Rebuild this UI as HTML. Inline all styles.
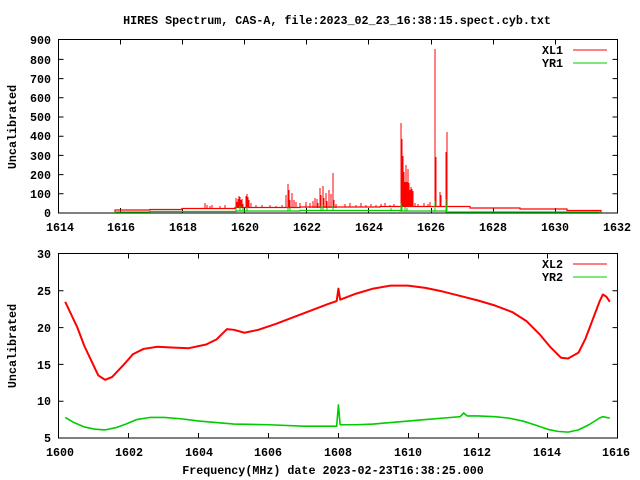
<!DOCTYPE html>
<html><head><style>
html,body{margin:0;padding:0;background:#fff;}
svg{display:block;}
text{font-family:"Liberation Mono","DejaVu Sans Mono",monospace;font-weight:bold;font-size:11.7px;fill:#000;}
</style></head><body>
<svg width="640" height="480" viewBox="0 0 640 480" xmlns="http://www.w3.org/2000/svg">
<rect width="640" height="480" fill="#fff"/>
<text x="337" y="24" text-anchor="middle">HIRES Spectrum, CAS-A, file:2023_02_23_16:38:15.spect.cyb.txt</text>

<!-- TOP PLOT -->
<g stroke="#000" stroke-width="1" fill="none">
<rect x="58.5" y="39.5" width="559" height="173.5"/>
<path d="M58.5 193.8h5M58.5 174.6h5M58.5 155.4h5M58.5 136.2h5M58.5 117h5M58.5 97.8h5M58.5 78.6h5M58.5 59.4h5
M617.5 193.8h-5M617.5 174.6h-5M617.5 155.4h-5M617.5 136.2h-5M617.5 117h-5M617.5 97.8h-5M617.5 78.6h-5M617.5 59.4h-5
M120.5 213v-5M182.5 213v-5M244.5 213v-5M306.5 213v-5M368.5 213v-5M431.5 213v-5M493.5 213v-5M555.5 213v-5
M120.5 39.5v5M182.5 39.5v5M244.5 39.5v5M306.5 39.5v5M368.5 39.5v5M431.5 39.5v5M493.5 39.5v5M555.5 39.5v5"/>
</g>
<g text-anchor="end">
<text x="51" y="217">0</text><text x="51" y="198">100</text><text x="51" y="179">200</text><text x="51" y="160">300</text><text x="51" y="140">400</text><text x="51" y="121">500</text><text x="51" y="102">600</text><text x="51" y="83">700</text><text x="51" y="64">800</text><text x="51" y="44">900</text>
</g>
<g text-anchor="middle">
<text x="60" y="231">1614</text><text x="121" y="231">1616</text><text x="183" y="231">1618</text><text x="245" y="231">1620</text><text x="307" y="231">1622</text><text x="369" y="231">1624</text><text x="431" y="231">1626</text><text x="493" y="231">1628</text><text x="555" y="231">1630</text><text x="617" y="231">1632</text>
</g>
<text transform="translate(16,127) rotate(-90)" text-anchor="middle">Uncalibrated</text>
<text x="563" y="54" text-anchor="end">XL1</text>
<text x="563" y="67" text-anchor="end">YR1</text>
<path d="M573 50h34" stroke="#f00" stroke-width="1"/>
<path d="M573 63h34" stroke="#0c0" stroke-width="1"/>

<path d="M115 213V210H150V209.5H182V208.5H235V207.5H300V207H380V206.5H470V208H520V209H567V210.5H601V213" stroke="#f00" stroke-width="1.2" fill="none"/>
<path stroke="#f00" stroke-width="1" fill="none" d="
M205 208V203M207 208V205M210 208V206M212 208V205M220 208V206M225 208V205
M236 208V198M237 208V202M238 208V199M239 208V196M240 208V197M241 208V200M242 208V199M243 208V204M246 208V196M247 208V194M248 208V197M249 208V200M251 208V203
M256 208V205M262 208V205M270 208V205M276 208V206M282 208V205
M286 208V195M288 208V184M289 208V190M290 208V200M292 208V193M294 208V200M296 208V202M300 208V203
M306 208V202M310 208V203M313 208V201M315 208V198M317 208V199M318 208V203M320 208V188M321 208V195M323 208V186M324 208V198M326 208V193M327 208V201M329 208V190M331 208V194M333 208V173M334 208V200M336 208V204
M345 207V204M350 207V203M356 207V205M361 207V203M366 207V205M371 207V204M376 207V205
M381 207V204M385 207V203M390 207V205M394 207V204
M401 207V123M402 207V139M403 207V156M404 207V172M405 207V182M406 207V165M407 207V182M408 207V169M409 207V183M410 207V190M411 207V187M412 207V189M413 207V191
M415 207V203M418 207V204M424 207V203M428 207V204M430 207V202
M435 207V49M436 207V157M440 207V192M441 207V195M446 207V152M447 207V132"/>
<path d="M115 213V212H150V211.5H236V211H300V210.5H400V211H446V212H600V213" stroke="#0c0" stroke-width="1.2" fill="none"/>
<path stroke="#0c0" stroke-width="1" fill="none" d="M236 211V207M240 211V206M243 211V208M247 211V207M288 211V207M290 211V208M321 211V206M323 211V205M327 211V208M333 211V206M401 211V203M402 211V206M405 211V207M407 211V208M435 211V201M446 211V199M447 211V205M391 211V208"/>

<!-- BOTTOM PLOT -->
<g stroke="#000" stroke-width="1" fill="none">
<rect x="58.5" y="253.5" width="559" height="184.5"/>
<path d="M58.5 401.2h5M58.5 364.4h5M58.5 327.6h5M58.5 290.8h5
M617.5 401.2h-5M617.5 364.4h-5M617.5 327.6h-5M617.5 290.8h-5
M128.5 438v-5M198.5 438v-5M268.5 438v-5M338.5 438v-5M408.5 438v-5M478.5 438v-5M547.5 438v-5
M128.5 253.5v5M198.5 253.5v5M268.5 253.5v5M338.5 253.5v5M408.5 253.5v5M478.5 253.5v5M547.5 253.5v5"/>
</g>
<g text-anchor="end">
<text x="51" y="442">5</text><text x="51" y="405">10</text><text x="51" y="369">15</text><text x="51" y="332">20</text><text x="51" y="295">25</text><text x="51" y="258">30</text>
</g>
<g text-anchor="middle">
<text x="60" y="456">1600</text><text x="129" y="456">1602</text><text x="199" y="456">1604</text><text x="268" y="456">1606</text><text x="338" y="456">1608</text><text x="408" y="456">1610</text><text x="477" y="456">1612</text><text x="547" y="456">1614</text><text x="616" y="456">1616</text>
</g>
<text transform="translate(16,346) rotate(-90)" text-anchor="middle">Uncalibrated</text>
<text x="333" y="474" text-anchor="middle">Frequency(MHz) date 2023-02-23T16:38:25.000</text>
<text x="563" y="268" text-anchor="end">XL2</text>
<text x="563" y="281" text-anchor="end">YR2</text>
<path d="M573 264h34" stroke="#f00" stroke-width="1"/>
<path d="M573 277h34" stroke="#0c0" stroke-width="1"/>

<g transform="translate(60,438) scale(34.8,-7.36) translate(-1600,-5)">
<polyline vector-effect="non-scaling-stroke" stroke="#f00" stroke-width="2" fill="none" stroke-linejoin="round" points="
1600.15,23.5 1600.3,22 1600.5,20 1600.7,17.5 1600.9,15.5 1601.1,13.5 1601.3,12.9 1601.5,13.3 1601.8,14.8 1602.1,16.4 1602.4,17.1 1602.8,17.4 1603.2,17.3 1603.7,17.2 1604.2,17.7 1604.5,18.4 1604.8,19.8 1605.0,19.7 1605.3,19.3 1605.7,19.7 1606.2,20.5 1606.7,21.4 1607.2,22.3 1607.7,23.2 1607.95,23.6 1608.0,25.3 1608.05,23.8 1608.5,24.6 1609.0,25.3 1609.5,25.7 1610.0,25.7 1610.5,25.4 1611.0,24.9 1611.5,24.3 1612.0,23.7 1612.5,23.0 1613.0,22.1 1613.4,20.9 1613.8,19.0 1614.1,17.3 1614.4,15.9 1614.6,15.8 1614.9,16.6 1615.1,18.5 1615.3,21.0 1615.5,23.5 1615.6,24.5 1615.7,24.2 1615.8,23.5"/>
<polyline vector-effect="non-scaling-stroke" stroke="#0c0" stroke-width="1.6" fill="none" stroke-linejoin="round" points="
1600.15,7.8 1600.4,7.1 1600.7,6.5 1601.0,6.2 1601.3,6.1 1601.6,6.4 1601.9,6.9 1602.2,7.5 1602.6,7.8 1603.0,7.8 1603.5,7.6 1604.0,7.3 1604.5,7.1 1605.0,6.9 1606.0,6.8 1607.0,6.6 1607.95,6.6 1608.0,9.5 1608.05,6.8 1608.5,6.8 1609.0,6.9 1609.5,7.1 1610.0,7.3 1610.5,7.5 1611.0,7.7 1611.5,7.9 1611.6,8.4 1611.7,8.0 1612.0,8.0 1612.5,7.9 1612.9,7.7 1613.3,7.3 1613.7,6.7 1614.0,6.2 1614.3,5.9 1614.6,5.8 1614.9,6.1 1615.2,6.8 1615.5,7.7 1615.6,7.9 1615.8,7.7"/>
</g>
</svg>
</body></html>
